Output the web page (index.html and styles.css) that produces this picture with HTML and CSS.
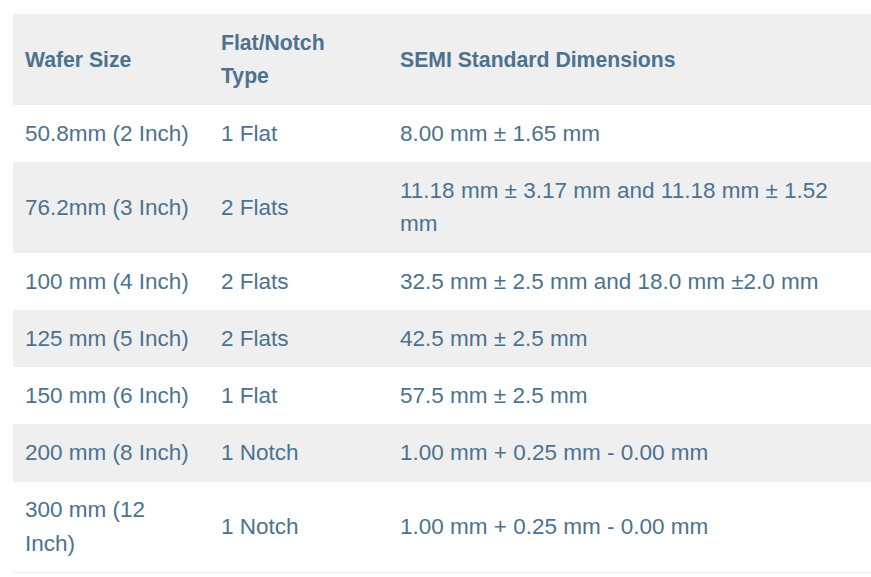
FILE: index.html
```html
<!DOCTYPE html>
<html>
<head>
<meta charset="utf-8">
<link rel="stylesheet" href="styles.css">
</head>
<body>
<table class="spec">
  <colgroup>
    <col class="c1">
    <col class="c2">
    <col class="c3">
  </colgroup>
  <thead>
    <tr><th>Wafer Size</th><th>Flat/Notch Type</th><th>SEMI Standard Dimensions</th></tr>
  </thead>
  <tbody>
    <tr><td>50.8mm (2 Inch)</td><td>1 Flat</td><td>8.00 mm ± 1.65 mm</td></tr>
    <tr class="alt"><td>76.2mm (3 Inch)</td><td>2 Flats</td><td>11.18 mm ± 3.17 mm and 11.18 mm ± 1.52 mm</td></tr>
    <tr><td>100 mm (4 Inch)</td><td>2 Flats</td><td>32.5 mm ± 2.5 mm and 18.0 mm ±2.0 mm</td></tr>
    <tr class="alt"><td>125 mm (5 Inch)</td><td>2 Flats</td><td>42.5 mm ± 2.5 mm</td></tr>
    <tr><td>150 mm (6 Inch)</td><td>1 Flat</td><td>57.5 mm ± 2.5 mm</td></tr>
    <tr class="alt"><td>200 mm (8 Inch)</td><td>1 Notch</td><td>1.00 mm + 0.25 mm - 0.00 mm</td></tr>
    <tr><td>300 mm (12 Inch)</td><td>1 Notch</td><td>1.00 mm + 0.25 mm - 0.00 mm</td></tr>
  </tbody>
</table>
</body>
</html>
```

FILE: styles.css
```css
html, body {
  margin: 0;
  padding: 0;
  background: #ffffff;
  overflow: hidden;
}
body {
  padding: 14px 0 0 13px;
  font-family: "Liberation Sans", Arial, sans-serif;
  color: #4c7290;
}
.spec {
  border-collapse: collapse;
  table-layout: fixed;
  width: 858px;
  font-size: 22.5px;
  line-height: 33.6px;
  border-bottom: 1px solid #ececec;
}
.c1 { width: 196px; }
.c2 { width: 179px; }
.c3 { width: 483px; }
.spec th,
.spec td {
  padding: 11.8px 16px 11.8px 12px;
  text-align: left;
  vertical-align: middle;
}
.spec th {
  font-weight: bold;
  font-size: 21.2px;
}
.spec thead tr,
.spec tr.alt {
  background: #efefef;
}
```
